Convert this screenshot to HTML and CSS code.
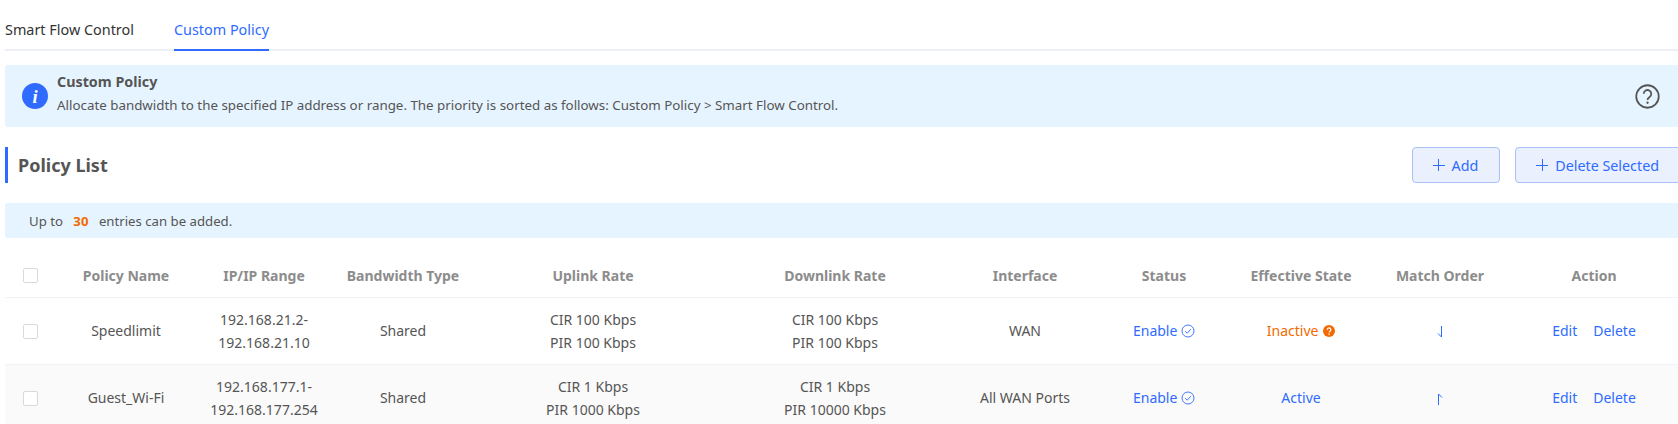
FILE: index.html
```html
<!DOCTYPE html>
<html lang="en">
<head>
<meta charset="utf-8">
<title>Custom Policy</title>
<link rel="stylesheet" href="styles.css">
</head>
<body>
<main class="page">
  <nav class="tabs">
    <a class="tab">Smart Flow Control</a>
    <a class="tab active">Custom Policy</a>
  </nav>
  <section class="banner">
    <svg class="info-icon" viewBox="0 0 24 24"><circle cx="12" cy="12" r="12" fill="#2f6bff"/><text x="12" y="18.5" text-anchor="middle" class="info-i">i</text></svg>
    <div class="banner-text">
      <div class="banner-title">Custom Policy</div>
      <div class="banner-desc">Allocate bandwidth to the specified IP address or range. The priority is sorted as follows: Custom Policy &gt; Smart Flow Control.</div>
    </div>
    <svg class="help-icon" viewBox="0 0 24 24"><circle cx="12" cy="12" r="10.8" fill="none" stroke="#555" stroke-width="1.7"/><path d="M8.4 9.4a3.6 3.6 0 1 1 5.6 3c-1.3.9-2 1.4-2 2.9" fill="none" stroke="#555" stroke-width="1.7"/><circle cx="12" cy="18" r="1.1" fill="#555"/></svg>
  </section>
  <header class="section-head">
    <h2 class="section-title">Policy List</h2>
    <div class="actions">
      <button class="btn"><span class="plus"></span>Add</button>
      <button class="btn"><span class="plus"></span>Delete Selected</button>
    </div>
  </header>
  <div class="note">Up to <b class="count">30</b> entries can be added.</div>
  <table class="grid">
    <colgroup>
      <col class="c-check"><col class="c-name"><col class="c-ip"><col class="c-bw"><col class="c-up"><col class="c-down"><col class="c-if"><col class="c-status"><col class="c-eff"><col class="c-order"><col class="c-action">
    </colgroup>
    <thead>
      <tr>
        <th class="check"><span class="box"></span></th>
        <th>Policy Name</th><th>IP/IP Range</th><th>Bandwidth Type</th><th>Uplink Rate</th><th>Downlink Rate</th><th>Interface</th><th>Status</th><th>Effective State</th><th>Match Order</th><th class="ops">Action</th>
      </tr>
    </thead>
    <tbody>
      <tr>
        <td class="check"><span class="box"></span></td>
        <td>Speedlimit</td>
        <td>192.168.21.2-<br>192.168.21.10</td>
        <td>Shared</td>
        <td>CIR 100 Kbps<br>PIR 100 Kbps</td>
        <td>CIR 100 Kbps<br>PIR 100 Kbps</td>
        <td>WAN</td>
        <td class="link">Enable <svg class="check-icon" viewBox="0 0 14 14"><circle cx="7" cy="7" r="6" fill="none" stroke="#2f6bff" stroke-width=".9"/><path d="M4.2 7.2l2 2 3.6-4" fill="none" stroke="#2f6bff" stroke-width=".9"/></svg></td>
        <td class="warn">Inactive <svg class="warn-icon" viewBox="0 0 14 14"><circle cx="7" cy="7" r="7" fill="#f26a00"/><path d="M4.9 5.5a2.1 2.1 0 1 1 3.3 1.7c-.7.5-1.1.8-1.1 1.6" fill="none" stroke="#fff" stroke-width="1.4"/><circle cx="7.1" cy="10.8" r=".9" fill="#fff"/></svg></td>
        <td><svg class="order-icon" viewBox="0 0 8 14"><path d="M5.5 1v11L2 8.5" fill="none" stroke="#2f6bff" stroke-width="1"/></svg></td>
        <td class="link ops"><a>Edit</a><a>Delete</a></td>
      </tr>
      <tr class="alt">
        <td class="check"><span class="box"></span></td>
        <td>Guest_Wi-Fi</td>
        <td>192.168.177.1-<br>192.168.177.254</td>
        <td>Shared</td>
        <td>CIR 1 Kbps<br>PIR 1000 Kbps</td>
        <td>CIR 1 Kbps<br>PIR 10000 Kbps</td>
        <td>All WAN Ports</td>
        <td class="link">Enable <svg class="check-icon" viewBox="0 0 14 14"><circle cx="7" cy="7" r="6" fill="none" stroke="#2f6bff" stroke-width=".9"/><path d="M4.2 7.2l2 2 3.6-4" fill="none" stroke="#2f6bff" stroke-width=".9"/></svg></td>
        <td class="link">Active</td>
        <td><svg class="order-icon" viewBox="0 0 8 14"><path d="M2.5 13V2L6 5.5" fill="none" stroke="#2f6bff" stroke-width="1"/></svg></td>
        <td class="link ops"><a>Edit</a><a>Delete</a></td>
      </tr>
    </tbody>
  </table>
</main>
</body>
</html>
```

FILE: styles.css
```css
* { box-sizing: border-box; }
html, body { margin: 0; height: 424px; overflow: hidden; background: #fff; }
body { font-family: "Noto Sans", "Open Sans", sans-serif; font-size: 14px; color: #555; }
.page { padding-left: 5px; width: 1678px; }

.tabs { display: flex; gap: 40px; height: 51px; border-bottom: 2px solid #eceff5; }
.tab { height: 51px; padding-top: 17px; line-height: 26px; font-size: 14.4px; color: #333; }
.tab.active { color: #2f6bff; border-bottom: 2px solid #2f6bff; }

.banner { display: flex; align-items: center; height: 62px; margin-top: 14px; padding: 0 18px 0 17px; background: #e6f4ff; border-radius: 3px 0 0 3px; }
.info-icon { width: 26px; height: 26px; flex: none; }
.info-i { font: italic 700 17px "Liberation Serif", serif; fill: #fff; }
.banner-text { flex: 1; margin-left: 9px; padding-bottom: 2px; }
.banner-title { font-size: 14.3px; font-weight: 700; line-height: 16px; margin-bottom: 4px; color: #555; }
.banner-desc { font-size: 13.35px; line-height: 22px; color: #555; }
.help-icon { width: 25px; height: 25px; flex: none; }

.section-head { display: flex; align-items: center; justify-content: space-between; height: 36px; margin-top: 20px; border-left: 3px solid #2f6bff; padding-left: 10px; }
.section-title { margin: 0; font-size: 18px; font-weight: 700; color: #555; }
.actions { display: flex; gap: 15px; margin-right: -3px; }
.btn { display: flex; align-items: center; min-width: 88px; height: 36px; padding: 0 21px 0 20px; font: 14.3px "Noto Sans", sans-serif; color: #2f6bff; background: #eaf0fe; border: 1px solid #a9c0fb; border-radius: 4px; }
.plus { width: 12px; height: 12px; margin-right: 7px; background: linear-gradient(#2f6bff, #2f6bff) center / 12px 1px no-repeat, linear-gradient(#2f6bff, #2f6bff) center / 1px 12px no-repeat; }

.note { height: 35px; margin-top: 20px; padding: 1px 0 0 24px; line-height: 35px; font-size: 13.2px; background: #e6f4ff; border-radius: 3px 0 0 3px; }
.count { margin: 0 7px; color: #f26a00; }

.grid { width: 1673px; border-collapse: collapse; table-layout: fixed; text-align: center; font-size: 14px; }
.c-check { width: 57px; } .c-name { width: 128px; } .c-ip { width: 148px; } .c-bw { width: 130px; }
.c-up { width: 250px; } .c-down { width: 234px; } .c-if { width: 146px; } .c-status { width: 132px; }
.c-eff { width: 142px; } .c-order { width: 136px; } .c-action { width: 170px; }
th, td { padding: 0; line-height: 23px; border-bottom: 1px solid #f2f3f9; }
th { height: 59px; padding-top: 17px; font-weight: 700; color: #8c8c8c; }
td { height: 67px; color: #555; }
.alt td { background: #fafafa; }
th.check, td.check { text-align: left; padding-left: 18px; }
td.check .box { margin-top: 2px; }
.box { display: block; width: 15px; height: 15px; border: 1px solid #d9d9d9; border-radius: 2px; background: #fff; }
td.link, .ops a { color: #2f6bff; }
td.warn { color: #f26a00; }
th.ops, td.ops { padding-left: 2px; }
.ops a + a { margin-left: 16px; }
.check-icon { width: 14px; height: 14px; vertical-align: -2px; }
.warn-icon { width: 12px; height: 12px; vertical-align: -1px; margin-left: 1px; }
.order-icon { width: 8px; height: 14px; vertical-align: middle; }
```
